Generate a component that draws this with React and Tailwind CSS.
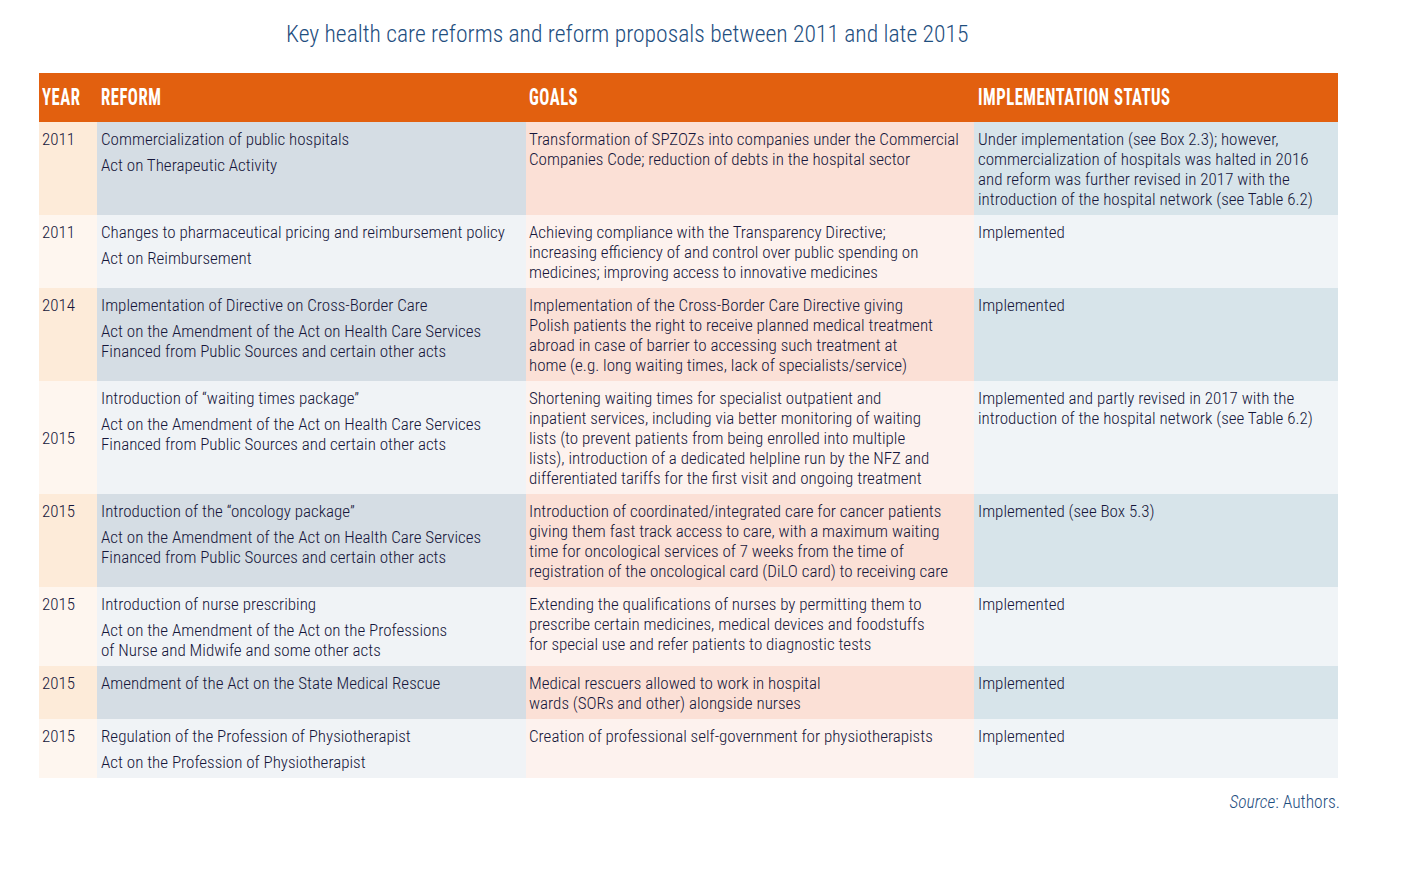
const rows = [
  {
    year: "2011",
    reform: "Commercialization of public hospitals",
    acts: ["Act on Therapeutic Activity"],
    goals: [
      "Transformation of SPZOZs into companies under the Commercial",
      "Companies Code; reduction of debts in the hospital sector",
    ],
    status: [
      "Under implementation (see Box 2.3); however,",
      "commercialization of hospitals was halted in 2016",
      "and reform was further revised in 2017 with the",
      "introduction of the hospital network (see Table 6.2)",
    ],
  },
  {
    year: "2011",
    reform: "Changes to pharmaceutical pricing and reimbursement policy",
    acts: ["Act on Reimbursement"],
    goals: [
      "Achieving compliance with the Transparency Directive;",
      "increasing efficiency of and control over public spending on",
      "medicines; improving access to innovative medicines",
    ],
    status: ["Implemented"],
  },
  {
    year: "2014",
    reform: "Implementation of Directive on Cross-Border Care",
    acts: [
      "Act on the Amendment of the Act on Health Care Services",
      "Financed from Public Sources and certain other acts",
    ],
    goals: [
      "Implementation of the Cross-Border Care Directive giving",
      "Polish patients the right to receive planned medical treatment",
      "abroad in case of barrier to accessing such treatment at",
      "home (e.g. long waiting times, lack of specialists/service)",
    ],
    status: ["Implemented"],
  },
  {
    year: "2015",
    center: true,
    reform: "Introduction of “waiting times package”",
    acts: [
      "Act on the Amendment of the Act on Health Care Services",
      "Financed from Public Sources and certain other acts",
    ],
    goals: [
      "Shortening waiting times for specialist outpatient and",
      "inpatient services, including via better monitoring of waiting",
      "lists (to prevent patients from being enrolled into multiple",
      "lists), introduction of a dedicated helpline run by the NFZ and",
      "differentiated tariffs for the first visit and ongoing treatment",
    ],
    status: [
      "Implemented and partly revised in 2017 with the",
      "introduction of the hospital network (see Table 6.2)",
    ],
  },
  {
    year: "2015",
    reform: "Introduction of the “oncology package”",
    acts: [
      "Act on the Amendment of the Act on Health Care Services",
      "Financed from Public Sources and certain other acts",
    ],
    goals: [
      "Introduction of coordinated/integrated care for cancer patients",
      "giving them fast track access to care, with a maximum waiting",
      "time for oncological services of 7 weeks from the time of",
      "registration of the oncological card (DiLO card) to receiving care",
    ],
    status: ["Implemented (see Box 5.3)"],
  },
  {
    year: "2015",
    reform: "Introduction of nurse prescribing",
    acts: [
      "Act on the Amendment of the Act on the Professions",
      "of Nurse and Midwife and some other acts",
    ],
    goals: [
      "Extending the qualifications of nurses by permitting them to",
      "prescribe certain medicines, medical devices and foodstuffs",
      "for special use and refer patients to diagnostic tests",
    ],
    status: ["Implemented"],
  },
  {
    year: "2015",
    reform: "Amendment of the Act on the State Medical Rescue",
    acts: [],
    goals: [
      "Medical rescuers allowed to work in hospital",
      "wards (SORs and other) alongside nurses",
    ],
    status: ["Implemented"],
  },
  {
    year: "2015",
    reform: "Regulation of the Profession of Physiotherapist",
    acts: ["Act on the Profession of Physiotherapist"],
    goals: ["Creation of professional self-government for physiotherapists"],
    status: ["Implemented"],
  },
];

function Lines({ lines }) {
  return lines.map((l, i) => (
    <div key={i} className="whitespace-nowrap">
      {l}
    </div>
  ));
}

function Head({ children, className }) {
  return (
    <div className={className}>
      <span className="inline-block origin-left scale-x-[0.71] whitespace-nowrap">{children}</span>
    </div>
  );
}

export default function App() {
  return (
    <div
      className="min-h-screen bg-white pl-[39px] pt-[18px] text-[#15163a]"
      style={{ fontFamily: "'Roboto Condensed', Roboto, 'Liberation Sans', sans-serif" }}
    >
      <h1 className="pl-[247px] text-[23.6px] font-light leading-[32px] text-[#1f4f7f]">
        Key health care reforms and reform proposals between 2011 and late 2015
      </h1>

      <div className="mt-[23px] w-[1299px]">
        <div className="grid h-[49px] grid-cols-[58px_429px_448px_364px] items-center overflow-hidden bg-[#e2600f] text-[23.5px] font-bold uppercase tracking-[0.03em] text-white">
          <Head className="pl-[3px]">Year</Head>
          <Head className="pl-[4px]">Reform</Head>
          <Head className="pl-[3px]">Goals</Head>
          <Head className="pl-[4px]">Implementation status</Head>
        </div>

        {rows.map((r, i) => {
          const odd = i % 2 === 0;
          return (
            <div
              key={i}
              className="grid grid-cols-[58px_429px_448px_364px] text-[17px] font-light leading-[20px]"
            >
              <div
                className={`flex pl-[3px] ${r.center ? "items-center" : "items-start pt-[7px] pb-[6px]"} ${odd ? "bg-[#fdebd9]" : "bg-[#fef6ef]"}`}
              >
                {r.year}
              </div>
              <div className={`pl-[4px] pt-[7px] pb-[6px] ${odd ? "bg-[#d5dde4]" : "bg-[#f0f3f6]"}`}>
                <div className="whitespace-nowrap">{r.reform}</div>
                {r.acts.length > 0 && (
                  <div className="mt-[6px]">
                    <Lines lines={r.acts} />
                  </div>
                )}
              </div>
              <div className={`pl-[3px] pt-[7px] pb-[6px] ${odd ? "bg-[#fbe0d6]" : "bg-[#fdf2ee]"}`}>
                <Lines lines={r.goals} />
              </div>
              <div className={`pl-[4px] pt-[7px] pb-[6px] ${odd ? "bg-[#d7e4ea]" : "bg-[#f0f4f7]"}`}>
                <Lines lines={r.status} />
              </div>
            </div>
          );
        })}

        <div className="mr-[-2px] mt-[11px] text-right text-[17.5px] font-light text-[#1f4f7f]">
          <span className="italic">Source</span>: Authors.
        </div>
      </div>
    </div>
  );
}
